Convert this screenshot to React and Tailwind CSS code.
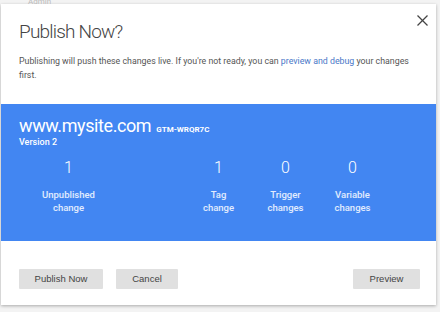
import React from 'react';

const COLS = [
  { n: '1', label: ['Tag', 'change'] },
  { n: '0', label: ['Trigger', 'changes'] },
  { n: '0', label: ['Variable', 'changes'] },
];

function Stat({ n, label }) {
  return (
    <div className="w-[67px] flex flex-col items-center">
      <div className="text-[16px] font-light leading-[20px] text-white">{n}</div>
      <div className="mt-[10px] text-[9.5px] font-medium leading-[13px] text-white/85 text-center">
        {label[0]}<br />{label[1]}
      </div>
    </div>
  );
}

export default function App() {
  return (
    <div className="w-[440px] h-[312px] bg-[#f3f3f3] overflow-hidden font-['Roboto',sans-serif]">
      <div className="h-[4px] pl-[28px] text-[8px] leading-[4px] text-[#bbb] overflow-hidden">Admin</div>
      <div className="ml-[1px] w-[435px] h-[301px] bg-white shadow-[0_1px_3px_rgba(0,0,0,0.3)] flex flex-col">
        {/* header */}
        <div className="relative px-[18px] pt-[16px] h-[100px]">
          <h1 className="text-[19px] font-light leading-[24px] tracking-[-0.8px] text-[#444]">Publish Now?</h1>
          <button className="absolute right-[8px] top-[11px] text-[#444]">
            <svg width="11" height="11" viewBox="0 0 11 11" stroke="currentColor" strokeWidth="1.3">
              <line x1="0.5" y1="0.5" x2="10.5" y2="10.5" /><line x1="10.5" y1="0.5" x2="0.5" y2="10.5" />
            </svg>
          </button>
          <p className="mt-[10px] text-[8.8px] leading-[14px] text-[#555]">
            Publishing will push these changes live. If you're not ready, you can{' '}
            <span className="text-[#4a78c8]">preview and debug</span> your changes first.
          </p>
        </div>

        {/* blue summary */}
        <div className="h-[137px] bg-[#4286f2] px-[18px] pt-[12px]">
          <div className="flex items-baseline gap-[5px] text-white">
            <span className="text-[18px] font-normal leading-[19px] tracking-[-0.4px]">www.mysite.com</span>
            <span className="text-[8px] font-bold uppercase">GTM-WRQR7C</span>
          </div>
          <div className="text-[9px] font-medium leading-[12px] text-white">Version 2</div>
          <div className="flex mt-[10px]">
            <div className="ml-[16px] w-[67px] flex flex-col items-center">
              <div className="text-[16px] font-light leading-[20px] text-white">1</div>
              <div className="mt-[10px] text-[9.5px] font-medium leading-[13px] text-white/85 text-center">
                Unpublished<br />change
              </div>
            </div>
            <div className="ml-[83px] flex">
              {COLS.map((c, i) => <Stat key={i} {...c} />)}
            </div>
          </div>
        </div>

        {/* footer */}
        <div className="flex items-center px-[18px] pt-[28px]">
          <button className="w-[84px] h-[20px] bg-[#e0e0e0] rounded-[1px] text-[9.5px] text-[#444] font-['Liberation_Sans',sans-serif]">Publish Now</button>
          <button className="ml-[13px] w-[62px] h-[20px] bg-[#e0e0e0] rounded-[1px] text-[9.5px] text-[#444] font-['Liberation_Sans',sans-serif]">Cancel</button>
          <button className="ml-auto mr-[-2px] w-[67px] h-[20px] bg-[#e0e0e0] rounded-[1px] text-[9.5px] text-[#444] font-['Liberation_Sans',sans-serif]">Preview</button>
        </div>
      </div>
    </div>
  );
}
